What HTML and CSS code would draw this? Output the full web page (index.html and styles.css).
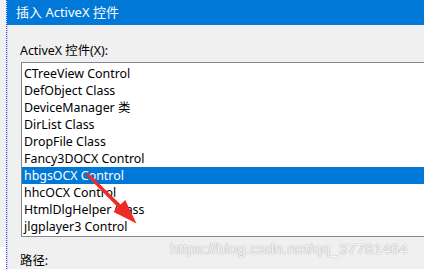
FILE: index.html
```html
<!DOCTYPE html>
<html lang="zh-CN">
<head>
<meta charset="utf-8">
<title>插入 ActiveX 控件</title>
<link rel="stylesheet" href="styles.css">
</head>
<body>
<div class="desk">
  <div class="strip"><div class="strip-top"></div></div>
  <div class="dialog">
    <div class="titlebar">插入 ActiveX 控件</div>
    <div class="content">
      <div class="label">ActiveX 控件(X):</div>
      <ul class="list">
        <li>CTreeView Control</li>
        <li>DefObject Class</li>
        <li>DeviceManager 类</li>
        <li>DirList Class</li>
        <li>DropFile Class</li>
        <li>Fancy3DOCX Control</li>
        <li class="selected">hbgsOCX Control</li>
        <li>hhcOCX Control</li>
        <li>HtmlDlgHelper Class</li>
        <li>jlgplayer3 Control</li>
      </ul>
      <div class="label path">路径:</div>
    </div>
  </div>
</div>
<svg class="arrow" width="424" height="269" viewBox="0 0 424 269">
  <polygon points="86,175 88.2,173 120.6,204.5 125.2,200 136.5,223.5 113.3,211.8 117.8,207.3" fill="#ee2b24"/>
</svg>
<div class="watermark">https://blog.csdn.net/qq_37781464</div>
</body>
</html>
```
FILE: styles.css
```css
html, body {
  margin: 0;
  padding: 0;
}
body {
  width: 424px;
  height: 269px;
  overflow: hidden;
  background: #ffffff;
  position: relative;
  font-family: "Noto Sans", "Noto Sans CJK SC", sans-serif;
  font-size: 12.4px;
  color: #000000;
}
.desk {
  display: flex;
  height: 269px;
}
.strip {
  width: 6px;
  border-right: 1px dotted #1a33ff;
  flex: none;
}
.strip-top {
  height: 247px;
  background: #f0f0f0;
}
.dialog {
  flex: 1;
  display: flex;
  flex-direction: column;
  background: #f0f0f0;
  min-width: 0;
  overflow: hidden;
}
.titlebar {
  height: 27px;
  background: #0078d7;
  color: #ffffff;
  font-size: 13px;
  line-height: 25px;
  padding-left: 9px;
  white-space: nowrap;
}
.content {
  border-left: 1px solid #d9d9d9;
  padding: 18px 0 0 12px;
  flex: 1;
}
.label {
  line-height: 16px;
  height: 16px;
  white-space: nowrap;
}
.list {
  list-style: none;
  margin: 3px 0 0 1px;
  padding: 2px 0 1px 0;
  background: #ffffff;
  border: 1px solid #828790;
  border-right: none;
}
.list li {
  height: 17px;
  line-height: 17px;
  padding-left: 2px;
  white-space: nowrap;
}
.list li.selected {
  background: #0078d7;
  color: #ffffff;
}
.path {
  margin-top: 16px;
}
.arrow {
  position: absolute;
  left: 0;
  top: 0;
}
.watermark {
  position: absolute;
  left: 170px;
  top: 240px;
  font-family: "Liberation Sans", Arial, sans-serif;
  font-size: 15.5px;
  color: rgba(255, 255, 255, 0.92);
  text-shadow: 0 0 1px rgba(0, 0, 0, 0.35), 0 0 2px rgba(0, 0, 0, 0.12);
  white-space: nowrap;
}
```
